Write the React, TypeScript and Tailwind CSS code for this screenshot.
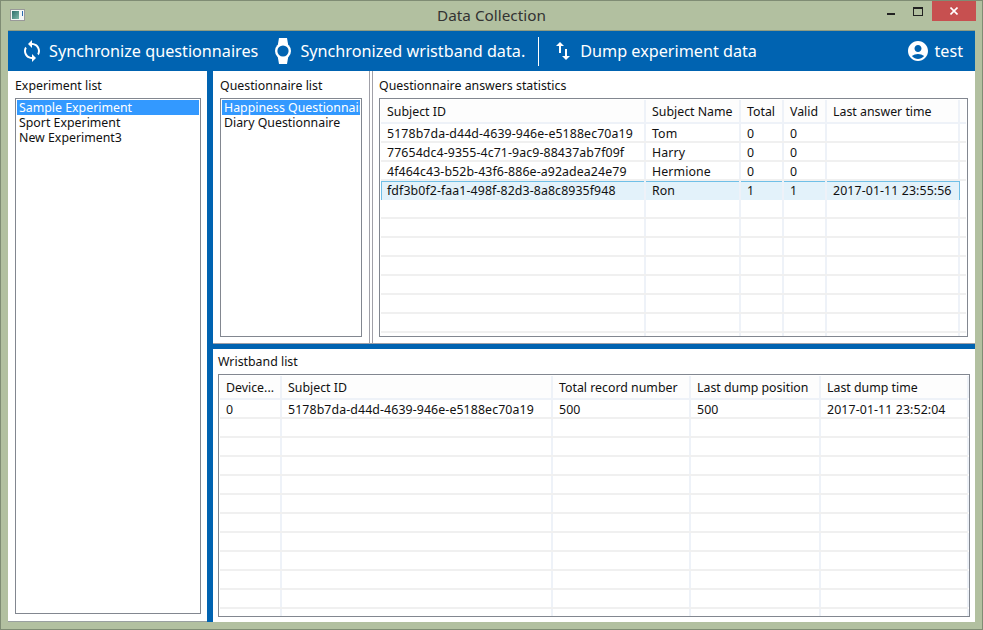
import { MdSync, MdSwapVert, MdAccountCircle } from 'react-icons/md';

const statsRows = [
  ['5178b7da-d44d-4639-946e-e5188ec70a19', 'Tom', '0', '0', ''],
  ['77654dc4-9355-4c71-9ac9-88437ab7f09f', 'Harry', '0', '0', ''],
  ['4f464c43-b52b-43f6-886e-a92adea24e79', 'Hermione', '0', '0', ''],
  ['fdf3b0f2-faa1-498f-82d3-8a8c8935f948', 'Ron', '1', '1', '2017-01-11 23:55:56'],
];

const statsHeads = ['Subject ID', 'Subject Name', 'Total', 'Valid', 'Last answer time'];
const statsWidths = [265, 95, 43, 43, 133];

const bandHeads = ['Device...', 'Subject ID', 'Total record number', 'Last dump position', 'Last dump time'];
const bandRow = ['0', '5178b7da-d44d-4639-946e-e5188ec70a19', '500', '500', '2017-01-11 23:52:04'];
const bandWidths = [62, 271, 138, 130, 148];

function Watch() {
  return (
    <svg viewBox="0 0 16 26" className="w-[16px] h-[26px]" fill="white">
      <path d="M4 0h8l1.2 7H2.8zM2.8 19h10.4L12 26H4z" />
      <circle cx="8" cy="13" r="8" />
      <circle cx="8" cy="13" r="5.6" fill="#0063b1" />
    </svg>
  );
}

function DataTable({
  heads,
  widths,
  rows,
  blank,
  selected,
}: {
  heads: string[];
  widths: number[];
  rows: string[][];
  blank: number;
  selected?: number;
}) {
  const all = [...rows, ...Array.from({ length: blank }, () => heads.map(() => ''))];
  return (
    <div className="flex-1 min-h-0 border border-[#828790] bg-white overflow-hidden p-px">
      <div className="flex h-[24px] bg-[#fdfdfd] border-b-2 border-[#eef2f8]">
        {heads.map((h, i) => (
          <div
            key={h}
            style={{ width: widths[i] }}
            className="shrink-0 px-[6px] leading-[23px] whitespace-nowrap overflow-hidden border-r-2 border-[#eef2f8]"
          >
            {h}
          </div>
        ))}
      </div>
      {all.map((row, r) => (
        <div
          key={r}
          className={
            r === selected
              ? 'flex w-fit h-[19px] bg-[#e3f2fa] shadow-[inset_1px_1px_0_#70c0e7,inset_-1px_0_0_#70c0e7]'
              : 'flex h-[19px] border-b-2 border-[#f0f0f0]'
          }
        >
          {row.map((c, i) => (
            <div
              key={i}
              style={{ width: widths[i] }}
              className={
                r === selected && i === row.length - 1
                  ? 'shrink-0 px-[6px] leading-[20px] tracking-[0.1px] whitespace-nowrap overflow-hidden'
                  : 'shrink-0 px-[6px] leading-[20px] tracking-[0.1px] whitespace-nowrap overflow-hidden border-r-2 border-[#eef2f8]'
              }
            >
              {c}
            </div>
          ))}
        </div>
      ))}
    </div>
  );
}

function ListBox({ items }: { items: string[] }) {
  return (
    <div className="flex-1 border border-[#828790] p-px overflow-hidden">
      {items.map((item, i) => (
        <div
          key={item}
          className={
            i === 0
              ? 'h-[15px] pl-[2px] leading-[15px] whitespace-nowrap overflow-hidden bg-[#3399ff] text-white'
              : 'h-[15px] pl-[2px] leading-[15px] whitespace-nowrap overflow-hidden'
          }
        >
          {item}
        </div>
      ))}
    </div>
  );
}

export default function App() {
  return (
    <div className="w-[983px] h-[630px] overflow-hidden bg-[#b2c0a0] border border-[#7f8c74] flex flex-col text-[12.35px] text-[#111] font-['Noto_Sans',sans-serif]">
      <div className="h-[29px] shrink-0 flex items-start">
        <div className="w-[95px] shrink-0 pl-[9px] pt-[8px]">
          <div className="w-[15px] h-[12px] bg-[#f4f6f4] border border-[#999] p-px flex justify-between">
            <div className="w-[7px] h-[8px] bg-gradient-to-br from-[#2f6f6c] to-[#7fb8a8]" />
            <div className="w-px h-[5px] bg-[#2b6cb0]" />
          </div>
        </div>
        <div className="flex-1 text-center text-[15.3px] leading-[28px] text-[#333]">Data Collection</div>
        <div className="w-[95px] shrink-0 flex items-start justify-end pr-[6px]">
          <div className="mt-[12px] mr-[18px] w-[8px] h-[2px] bg-[#222]" />
          <div className="mt-[6px] mr-[9px] w-[10px] h-[9px] border border-[#222] border-t-[2px]" />
          <div className="w-[45px] h-[20px] bg-[#c75050] flex items-center justify-center">
            <svg viewBox="0 0 8 8" className="w-[8px] h-[8px]" stroke="white" strokeWidth="1.6">
              <path d="M0.5 0.5l7 7M7.5 0.5l-7 7" />
            </svg>
          </div>
        </div>
      </div>

      <div className="flex-1 min-h-0 mx-[7px] mb-[7px] border-t border-[#8f9c82] flex flex-col bg-white">
        <div className="h-[40px] shrink-0 bg-[#0063b1] text-white flex items-center text-[16.2px] pl-[12px] pr-[12px]">
          <MdSync size={24} className="mr-[5px]" />
          <span>Synchronize questionnaires</span>
          <span className="ml-[17px] mr-[9px]">
            <Watch />
          </span>
          <span>Synchronized wristband data.</span>
          <div className="w-px h-[29px] bg-white ml-[13px] mr-[12px]" />
          <MdSwapVert size={24} className="mr-[5px]" />
          <span>Dump experiment data</span>
          <MdAccountCircle size={24} className="ml-auto mr-[4px]" />
          <span>test</span>
        </div>

        <div className="flex-1 min-h-0 flex">
          <div className="w-[199px] shrink-0 flex flex-col pl-[7px] pr-[6px] pb-[7px] border-b border-[#9aa0a0]">
            <div className="h-[27px] leading-[29px] shrink-0">Experiment list</div>
            <ListBox items={['Sample Experiment', 'Sport Experiment', 'New Experiment3']} />
          </div>

          <div className="w-[6px] shrink-0 bg-[#0063b1]" />

          <div className="flex-1 min-w-0 flex flex-col">
            <div className="h-[273px] shrink-0 flex border-b border-[#a0a0a8]">
              <div className="w-[156px] shrink-0 flex flex-col pl-[7px] pr-[7px] pb-[6px]">
                <div className="h-[27px] leading-[29px] shrink-0">Questionnaire list</div>
                <ListBox items={['Happiness Questionnaire', 'Diary Questionnaire']} />
              </div>
              <div className="w-[4px] shrink-0 border-x border-[#a0a0a8]" />
              <div className="flex-1 min-w-0 flex flex-col pl-[6px] pr-[7px] pb-[6px]">
                <div className="h-[27px] leading-[29px] shrink-0">Questionnaire answers statistics</div>
                <DataTable heads={statsHeads} widths={statsWidths} rows={statsRows} blank={8} selected={3} />
              </div>
            </div>
            <div className="h-[5px] shrink-0 bg-[#0063b1]" />
            <div className="flex-1 min-h-0 flex flex-col pl-[5px] pr-[5px] pb-[5px]">
              <div className="h-[25px] leading-[26px] shrink-0">Wristband list</div>
              <DataTable heads={bandHeads} widths={bandWidths} rows={[bandRow]} blank={11} />
            </div>
          </div>
        </div>
      </div>
    </div>
  );
}
